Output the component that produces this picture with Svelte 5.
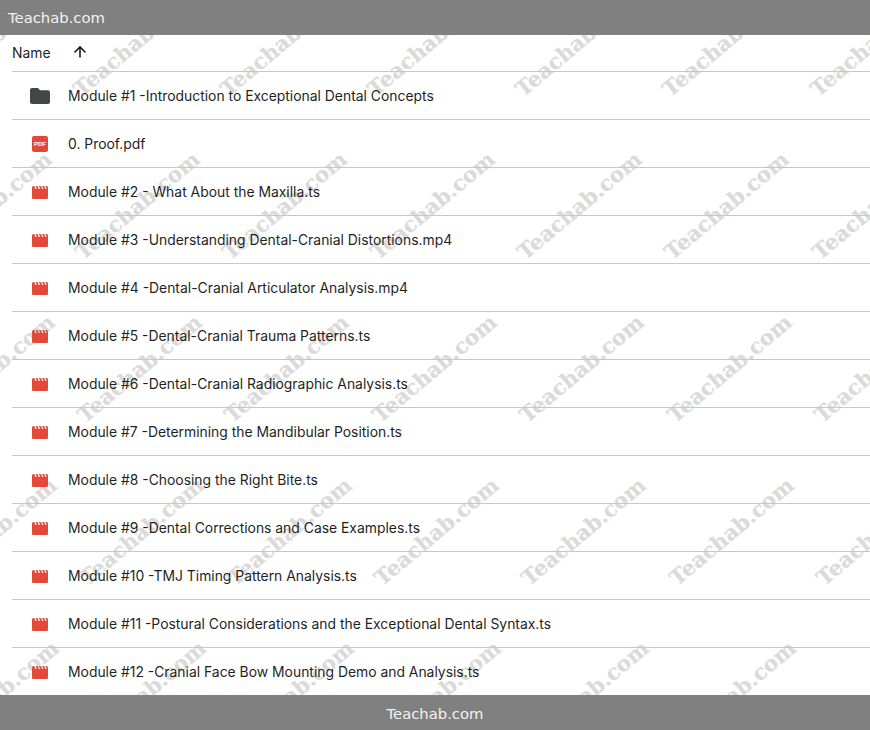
<script>
  const rows = [
    ['folder', 'Module #1 -Introduction to Exceptional Dental Concepts'],
    ['pdf', '0. Proof.pdf'],
    ['video', 'Module #2 - What About the Maxilla.ts'],
    ['video', 'Module #3 -Understanding Dental-Cranial Distortions.mp4'],
    ['video', 'Module #4 -Dental-Cranial Articulator Analysis.mp4'],
    ['video', 'Module #5 -Dental-Cranial Trauma Patterns.ts'],
    ['video', 'Module #6 -Dental-Cranial Radiographic Analysis.ts'],
    ['video', 'Module #7 -Determining the Mandibular Position.ts'],
    ['video', 'Module #8 -Choosing the Right Bite.ts'],
    ['video', 'Module #9 -Dental Corrections and Case Examples.ts'],
    ['video', 'Module #10 -TMJ Timing Pattern Analysis.ts'],
    ['video', 'Module #11 -Postural Considerations and the Exceptional Dental Syntax.ts'],
    ['video', 'Module #12 -Cranial Face Bow Mounting Demo and Analysis.ts']
  ];
  const marks = [];
  for (let r = 0; r < 5; r++) {
    for (let c = -1; c < 6; c++) {
      marks.push({ x: 82.5 + 147.4 * c + r * 2.2, y: 79 + 163 * r });
    }
  }
</script>

<div class="page">
  <header class="top">Teachab.com</header>
  <main class="list">
    <div class="marks" aria-hidden="true">
      {#each marks as m}
        <span class="mark" style="left:{m.x}px;top:{m.y}px">Teachab.com</span>
      {/each}
    </div>
    <div class="head">
      <span class="name">Name</span>
      <svg class="arrow" viewBox="0 0 16 16" width="16" height="16"><path d="M8 12.500V2M2.500 7.500L8 2l5.500 5.500" fill="none" stroke="#1f1f1f" stroke-width="1.600"/></svg>
    </div>
    {#each rows as [kind, label]}
      <div class="row">
        <span class="icon">
          {#if kind === 'folder'}
            <svg viewBox="0 0 20 16" width="20" height="16"><path d="M2 0h6l2 2.200h8a2 2 0 0 1 2 2V14a2 2 0 0 1-2 2H2a2 2 0 0 1-2-2V2a2 2 0 0 1 2-2z" fill="#444746"/></svg>
          {:else if kind === 'pdf'}
            <svg viewBox="0 0 16 16" width="16" height="16"><rect width="16" height="16" rx="2" fill="#e2493a"/><text x="8" y="10.400" text-anchor="middle" class="pdf">PDF</text></svg>
          {:else}
            <svg class="clap" viewBox="0 0 16 13" width="16" height="13"><path d="M1.500 0h.7l1.300 3h1.300L3.500 0h2l1.300 3h1.300L6.800 0h2l1.300 3h1.300L10.100 0h2l1.300 3h1.300L13.400 0h1.100A1.500 1.500 0 0 1 16 1.500v10a1.500 1.500 0 0 1-1.500 1.500h-13A1.500 1.500 0 0 1 0 11.500v-10A1.500 1.500 0 0 1 1.500 0z" fill="#e2493a"/></svg>
          {/if}
        </span>
        <span class="label">{label}</span>
      </div>
    {/each}
  </main>
  <footer class="bottom">Teachab.com</footer>
</div>

<style>
  :global(body) { margin: 0; background: #fff; }
  .page {
    width: 870px;
    height: 730px;
    display: flex;
    flex-direction: column;
    overflow: hidden;
    font-family: Inter, "Liberation Sans", sans-serif;
  }
  .top, .bottom {
    flex: 0 0 35px;
    min-height: 0;
    overflow: hidden;
    background: #808080;
    color: #f2f2f2;
    font-family: "DejaVu Sans", sans-serif;
    font-size: 14.800px;
    position: relative;
    z-index: 2;
  }
  .top { padding-left: 8px; line-height: 35px; }
  .bottom { text-align: center; line-height: 37px; }
  .list {
    flex: 1;
    min-height: 0;
    position: relative;
    overflow: hidden;
    padding-left: 12px;
    color: #1f1f1f;
    font-size: 13.900px;
  }
  .head {
    height: 36px;
    display: flex;
    align-items: center;
    border-bottom: 1px solid #c7c7c7;
    position: relative;
  }
  .name { width: 60px; }
  .arrow { display: block; }
  .row {
    height: 47px;
    display: flex;
    align-items: center;
    border-bottom: 1px solid #c7c7c7;
    position: relative;
  }
  .row:last-child { border-bottom: 0; }
  .icon {
    width: 56px;
    display: flex;
    justify-content: center;
    flex: none;
  }
  .icon svg { display: block; }
  .icon .clap { margin-top: 1px; }
  .pdf { font: bold 6px "Liberation Sans", sans-serif; fill: #fff; }
  .marks { position: absolute; inset: -35px 0 0 0; pointer-events: none; }
  .mark {
    position: absolute;
    font: bold 21.200px "DejaVu Serif", serif;
    color: #dadada;
    text-shadow: 1px 1px 1px #f4f4f4;
    transform-origin: 0 100%;
    transform: rotate(-40deg);
    white-space: nowrap;
    line-height: 1;
  }
</style>
